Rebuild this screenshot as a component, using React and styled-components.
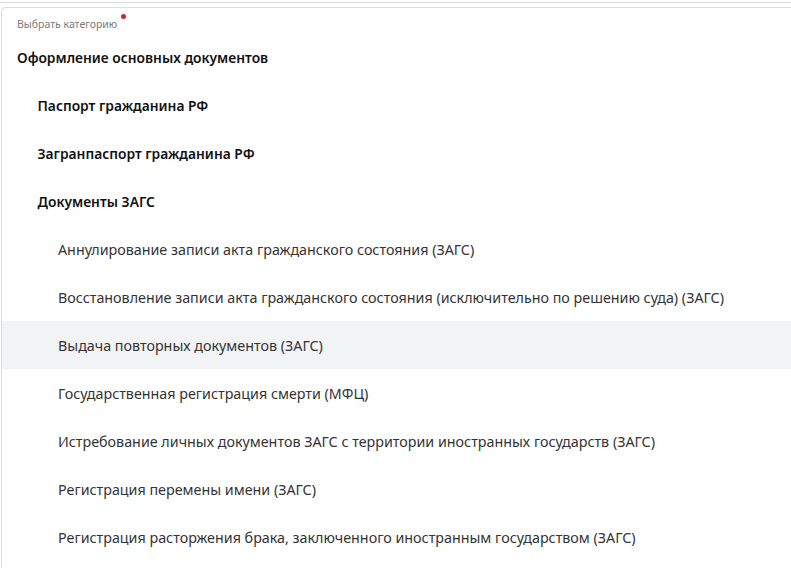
import React from "react";
import styled, { createGlobalStyle } from "styled-components";

const GlobalStyle = createGlobalStyle`
  html, body {
    margin: 0;
    padding: 0;
    background: #ffffff;
    overflow: hidden;
  }
  body {
    font-family: "Noto Sans", "Open Sans", Arial, sans-serif;
  }
`;

const Page = styled.div`
  width: 791px;
  height: 568px;
  padding-top: 2px;
  box-sizing: border-box;
  overflow: hidden;
`;

const TopLine = styled.div`
  height: 1px;
  background: #dcdcdc;
  margin-bottom: 4px;
`;

const Panel = styled.div`
  margin-left: 1px;
  width: 820px;
  padding-bottom: 40px;
  border: 1px solid #dcdcdc;
  border-radius: 4px 0 0 0;
  background: #fff;
`;

const Label = styled.div`
  position: relative;
  display: inline-block;
  margin: 8px 0 0 15px;
  height: 16px;
  line-height: 16px;
  font-size: 10.5px;
  color: #7a7a7a;
`;

const Required = styled.span`
  position: absolute;
  top: -2px;
  right: -9px;
  width: 5px;
  height: 5px;
  border-radius: 50%;
  background: #c8283a;
`;

const List = styled.ul`
  list-style: none;
  margin: 0;
  padding: 0;
`;

const Item = styled.li`
  height: 48px;
  display: flex;
  align-items: center;
  padding-left: ${(p) => 15 + p.$level * 20.5}px;
  font-size: ${(p) => (p.$group ? "13.8px" : "14.3px")};
  font-weight: ${(p) => (p.$group ? 600 : 400)};
  color: ${(p) => (p.$group ? "#111" : "#333")};
  background: ${(p) => (p.$active ? "#f2f3f5" : "transparent")};
  white-space: nowrap;
  cursor: pointer;
`;

const items = [
  { text: "Оформление основных документов", level: 0, group: true },
  { text: "Паспорт гражданина РФ", level: 1, group: true },
  { text: "Загранпаспорт гражданина РФ", level: 1, group: true },
  { text: "Документы ЗАГС", level: 1, group: true },
  { text: "Аннулирование записи акта гражданского состояния (ЗАГС)", level: 2 },
  {
    text: "Восстановление записи акта гражданского состояния (исключительно по решению суда) (ЗАГС)",
    level: 2,
  },
  { text: "Выдача повторных документов (ЗАГС)", level: 2, active: true },
  { text: "Государственная регистрация смерти (МФЦ)", level: 2 },
  {
    text: "Истребование личных документов ЗАГС с территории иностранных государств (ЗАГС)",
    level: 2,
  },
  { text: "Регистрация перемены имени (ЗАГС)", level: 2 },
  {
    text: "Регистрация расторжения брака, заключенного иностранным государством (ЗАГС)",
    level: 2,
  },
];

export default function App() {
  return (
    <Page>
      <GlobalStyle />
      <TopLine />
      <Panel>
        <Label>
          Выбрать категорию
          <Required />
        </Label>
        <List>
          {items.map((item) => (
            <Item
              key={item.text}
              $level={item.level}
              $group={item.group}
              $active={item.active}
            >
              {item.text}
            </Item>
          ))}
        </List>
      </Panel>
    </Page>
  );
}
